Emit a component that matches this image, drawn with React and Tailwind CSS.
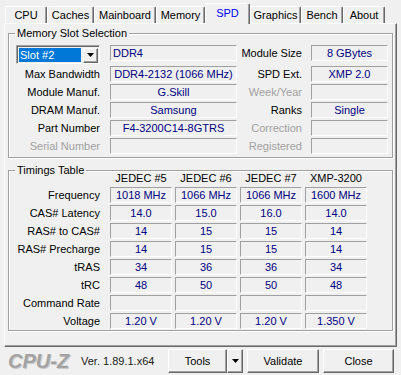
import React from 'react';

// ventana SPD de CPU-Z, estilo clásico de Windows
const tabs = [
  { name: 'CPU', w: 'w-[42px]' },
  { name: 'Caches', w: 'w-[47px]' },
  { name: 'Mainboard', w: 'w-[62px]' },
  { name: 'Memory', w: 'w-[49px]' },
  { name: 'SPD', w: 'w-[45px]', active: true },
  { name: 'Graphics', w: 'w-[51px]' },
  { name: 'Bench', w: 'w-[42px]' },
  { name: 'About', w: 'w-[42px]' },
];

const sunken = 'border border-t-[#a0a0a0] border-l-[#a0a0a0] border-r-white border-b-white';
const raised = 'border border-t-white border-l-white border-r-[#696969] border-b-[#696969] shadow-[inset_-1px_-1px_0_#a0a0a0]';

function Field({ children, w, left }) {
  return (
    <div className={`h-[16px] ${w} ${sunken} flex items-center text-[#000080] whitespace-nowrap ${left ? 'pl-[2px]' : 'justify-center'}`}>
      {children}
    </div>
  );
}

function Label({ children, w, off }) {
  return (
    <div className={`${w} text-right whitespace-nowrap ${off ? 'text-[#a0a0a0]' : 'text-black'}`}>{children}</div>
  );
}

function GroupBox({ title, children, cls }) {
  return (
    <div className={`relative w-[385px] border border-[#a0a0a0] shadow-[1px_1px_0_white,inset_1px_1px_0_white] ${cls}`}>
      <span className="absolute -top-[8px] left-[6px] px-[2px] bg-[#f0f0f0] leading-[14px] text-black">{title}</span>
      {children}
    </div>
  );
}

function Arrow() {
  return (
    <svg width="7" height="4" viewBox="0 0 7 4">
      <path d="M0 0h7L3.5 4z" fill="#000" />
    </svg>
  );
}

const memRows = [
  ['Max Bandwidth', 'DDR4-2132 (1066 MHz)', 'SPD Ext.', 'XMP 2.0', false, false],
  ['Module Manuf.', 'G.Skill', 'Week/Year', '', false, true],
  ['DRAM Manuf.', 'Samsung', 'Ranks', 'Single', false, false],
  ['Part Number', 'F4-3200C14-8GTRS', 'Correction', '', false, true],
  ['Serial Number', '', 'Registered', '', true, true],
];

const timings = [
  ['Frequency', ['1018 MHz', '1066 MHz', '1066 MHz', '1600 MHz']],
  ['CAS# Latency', ['14.0', '15.0', '16.0', '14.0']],
  ['RAS# to CAS#', ['14', '15', '15', '14']],
  ['RAS# Precharge', ['14', '15', '15', '14']],
  ['tRAS', ['34', '36', '36', '34']],
  ['tRC', ['48', '50', '50', '48']],
  ['Command Rate', ['', '', '', '']],
  ['Voltage', ['1.20 V', '1.20 V', '1.20 V', '1.350 V']],
];

export default function App() {
  return (
    <div className="w-[401px] h-[375px] bg-[#f0f0f0] overflow-hidden font-['Liberation_Sans',Arial,sans-serif] text-[11px] leading-[13px] select-none">
      {/* pestañas */}
      <div className="h-[23px] flex items-end pl-[5px]">
        {tabs.map((t) => (
          <div
            key={t.name}
            className={`${t.w} flex items-center justify-center border border-b-0 border-t-white border-l-white border-r-[#696969] shadow-[inset_-1px_0_0_#a0a0a0] rounded-t-[2px] bg-[#f0f0f0] ${t.active ? 'h-[21px] -mb-[1px] relative z-10 text-[#0000ff] pb-[2px]' : 'h-[17px] text-black'}`}
          >
            {t.name}
          </div>
        ))}
      </div>

      {/* panel */}
      <div className={`w-[393px] h-[324px] ml-[4px] ${raised} pt-[9px] pl-[3px]`}>
        <GroupBox title="Memory Slot Selection" cls="pt-[11px] pb-[3px] pl-[7px]">
          <div className="flex items-start h-[19px]">
            <div className="w-[84px] h-[19px] border border-t-[#a0a0a0] border-l-[#a0a0a0] border-r-white border-b-white shadow-[inset_1px_1px_0_#696969] flex items-center pl-[2px] pr-[1px] pt-[1px]">
              <div className="flex-1 h-[14px] bg-[#0078d7] text-white flex items-center pl-[1px] mr-[2px]">Slot #2</div>
              <div className={`w-[15px] h-[15px] ${raised} bg-[#f0f0f0] flex items-center justify-center`}>
                <Arrow />
              </div>
            </div>
            <div className="ml-[10px]">
              <Field w="w-[127px]" left>DDR4</Field>
            </div>
            <div className="w-[65px] h-[16px] flex items-center justify-end">Module Size</div>
            <div className="ml-[9px]">
              <Field w="w-[77px]">8 GBytes</Field>
            </div>
          </div>
          <div className="flex flex-col gap-[2px] mt-[2px]">
            {memRows.map(([l1, v1, l2, v2, off1, off2]) => (
              <div key={l1} className="flex items-center h-[16px]">
                <Label w="w-[84px]" off={off1}>{l1}</Label>
                <div className="ml-[10px]">
                  <Field w="w-[127px]">{v1}</Field>
                </div>
                <Label w="w-[65px]" off={off2 && !v2}>{l2}</Label>
                <div className="ml-[9px]">
                  <Field w="w-[77px]">{v2}</Field>
                </div>
              </div>
            ))}
          </div>
        </GroupBox>

        <GroupBox title="Timings Table" cls="mt-[12px] pb-[1px] pl-[7px]">
          <div className="flex items-center h-[15px] mt-[0px]">
            <div className="w-[84px]" />
            <div className="ml-[10px] flex gap-[3px]">
              {['JEDEC #5', 'JEDEC #6', 'JEDEC #7', 'XMP-3200'].map((h) => (
                <div key={h} className="w-[62px] text-center text-black whitespace-nowrap">{h}</div>
              ))}
            </div>
          </div>
          <div className="flex flex-col gap-[2px] mt-[1px]">
            {timings.map(([label, vals]) => (
              <div key={label} className="flex items-center h-[16px]">
                <Label w="w-[84px]">{label}</Label>
                <div className="ml-[10px] flex gap-[3px]">
                  {vals.map((v, i) => (
                    <Field key={i} w="w-[62px]">{v}</Field>
                  ))}
                </div>
              </div>
            ))}
          </div>
        </GroupBox>
      </div>

      {/* barra inferior */}
      <div className="h-[28px] flex items-center pl-[8px] pr-[7px]">
        <div className="w-[62px] text-[20px] leading-[20px] font-bold italic text-[#a3a3a3] [text-shadow:1px_1px_0_#c8c8c8]">CPU-Z</div>
        <div className="ml-[11px] text-[#1a1a1a]">Ver. 1.89.1.x64</div>
        <div className="ml-auto flex items-center gap-[4px]">
          <div className="flex">
            <div className={`w-[59px] h-[24px] ${raised} flex items-center justify-center text-black`}>Tools</div>
            <div className={`w-[16px] h-[24px] ${raised} flex items-center justify-center`}>
              <Arrow />
            </div>
          </div>
          <div className={`w-[72px] h-[24px] ${raised} flex items-center justify-center text-black`}>Validate</div>
          <div className={`w-[71px] h-[24px] ${raised} flex items-center justify-center text-black`}>Close</div>
        </div>
      </div>
    </div>
  );
}
